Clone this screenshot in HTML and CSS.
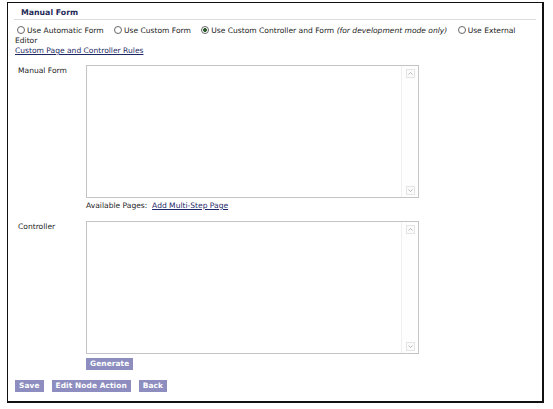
FILE: index.html
```html
<!DOCTYPE html>
<html>
<head>
<meta charset="utf-8">
<link rel="stylesheet" href="styles.css">
</head>
<body>
<div class="panel">
  <div class="title">Manual Form</div>
  <div class="modes">
    <input type="radio" name="mode" id="m1"><label for="m1">Use Automatic Form</label>
    <input type="radio" name="mode" id="m2"><label for="m2">Use Custom Form</label>
    <input type="radio" name="mode" id="m3" checked><label class="tight" for="m3">Use Custom Controller and Form</label> <em>(for development mode only)</em>
    <input type="radio" name="mode" id="m4"><label for="m4">Use External</label> <span>Editor</span>
  </div>
  <a class="link rules" href="#">Custom Page and Controller Rules</a>

  <div class="grid">
    <div class="label">Manual Form</div>
    <div class="area">
      <textarea></textarea>
      <div class="sbar">
        <svg width="9" height="9" viewBox="0 0 9 9"><rect x="0.5" y="0.5" width="8" height="8" fill="#fbfbfb" stroke="#e4e4e4"/><polyline points="2.5,5.5 4.5,3.5 6.5,5.5" fill="none" stroke="#b8b8b8" stroke-width="1"/></svg>
        <svg width="9" height="9" viewBox="0 0 9 9"><rect x="0.5" y="0.5" width="8" height="8" fill="#fbfbfb" stroke="#e4e4e4"/><polyline points="2.5,3.5 4.5,5.5 6.5,3.5" fill="none" stroke="#b8b8b8" stroke-width="1"/></svg>
      </div>
    </div>

    <div></div>
    <div class="pages">Available Pages:&nbsp; <a class="link" href="#">Add Multi-Step Page</a></div>

    <div class="label">Controller</div>
    <div class="area">
      <textarea></textarea>
      <div class="sbar">
        <svg width="9" height="9" viewBox="0 0 9 9"><rect x="0.5" y="0.5" width="8" height="8" fill="#fbfbfb" stroke="#e4e4e4"/><polyline points="2.5,5.5 4.5,3.5 6.5,5.5" fill="none" stroke="#b8b8b8" stroke-width="1"/></svg>
        <svg width="9" height="9" viewBox="0 0 9 9"><rect x="0.5" y="0.5" width="8" height="8" fill="#fbfbfb" stroke="#e4e4e4"/><polyline points="2.5,3.5 4.5,5.5 6.5,3.5" fill="none" stroke="#b8b8b8" stroke-width="1"/></svg>
      </div>
    </div>

    <div></div>
    <div class="gen"><button class="btn">Generate</button></div>
  </div>

  <div class="actions">
    <button class="btn">Save</button>
    <button class="btn">Edit Node Action</button>
    <button class="btn">Back</button>
  </div>
</div>
</body>
</html>
```

FILE: styles.css
```css
html, body {
  margin: 0;
  padding: 0;
  background: #fff;
}
body {
  font-family: "DejaVu Sans", Verdana, sans-serif;
  font-size: 7.55px;
  color: #222;
}
.panel {
  box-sizing: border-box;
  margin: 2px 0 0 7px;
  width: 537px;
  height: 401px;
  border: 1px solid #111;
  border-right-width: 2px;
  border-bottom-width: 2px;
  box-shadow: 0 1px 0 #bbb;
  padding: 0 7px;
}
.title {
  font-weight: bold;
  font-size: 7.8px;
  color: #1f2b58;
  line-height: 11px;
  padding: 4px 0 1px 7px;
  border-bottom: 1px solid #ddd;
  margin: 0 -1px;
}
.modes {
  margin-top: 6px;
  line-height: 10px;
}
.modes label {
  margin-right: 6px;
}
.modes label.tight {
  margin-right: 0;
}
.modes em {
  font-style: italic;
  margin-right: 6px;
}
.modes input {
  appearance: none;
  -webkit-appearance: none;
  box-sizing: border-box;
  width: 8px;
  height: 8px;
  margin: 0 2px 0 2px;
  border: 1px solid #666;
  border-radius: 50%;
  background: #fff;
  vertical-align: -1px;
}
.modes input:checked {
  background: radial-gradient(circle, #2c5a2c 0 1.6px, #fff 2.2px);
}
.link {
  color: #1c2766;
  text-decoration: underline;
}
.rules {
  display: block;
  line-height: 10px;
}
.grid {
  display: grid;
  grid-template-columns: 71px 333px;
  margin-top: 9px;
}
.label {
  padding: 1px 0 0 3px;
  line-height: 10px;
}
.area {
  box-sizing: border-box;
  height: 133px;
  border: 1px solid #c4c4c8;
  display: flex;
  background: #fff;
}
.area textarea {
  flex: 1;
  border: none;
  outline: none;
  resize: none;
  margin: 0;
  padding: 2px;
  font: inherit;
  background: #fff;
}
.sbar {
  width: 16px;
  border-left: 1px solid #f0f0f0;
  background: #fefefe;
  display: flex;
  flex-direction: column;
  justify-content: space-between;
  align-items: center;
  padding: 3px 0 2px;
}
.pages {
  line-height: 10px;
  padding: 3px 0 10px;
}
.gen {
  padding-top: 4px;
  line-height: 0;
}
.btn {
  font-family: "DejaVu Sans", Verdana, sans-serif;
  font-weight: bold;
  font-size: 7.4px;
  color: #fff;
  background: #8d8dc0;
  border: none;
  height: 12px;
  line-height: 12px;
  padding: 0 4px;
  margin: 0;
  letter-spacing: 0.1px;
}
.actions {
  display: flex;
  gap: 8px;
  margin-top: 10px;
}
```
